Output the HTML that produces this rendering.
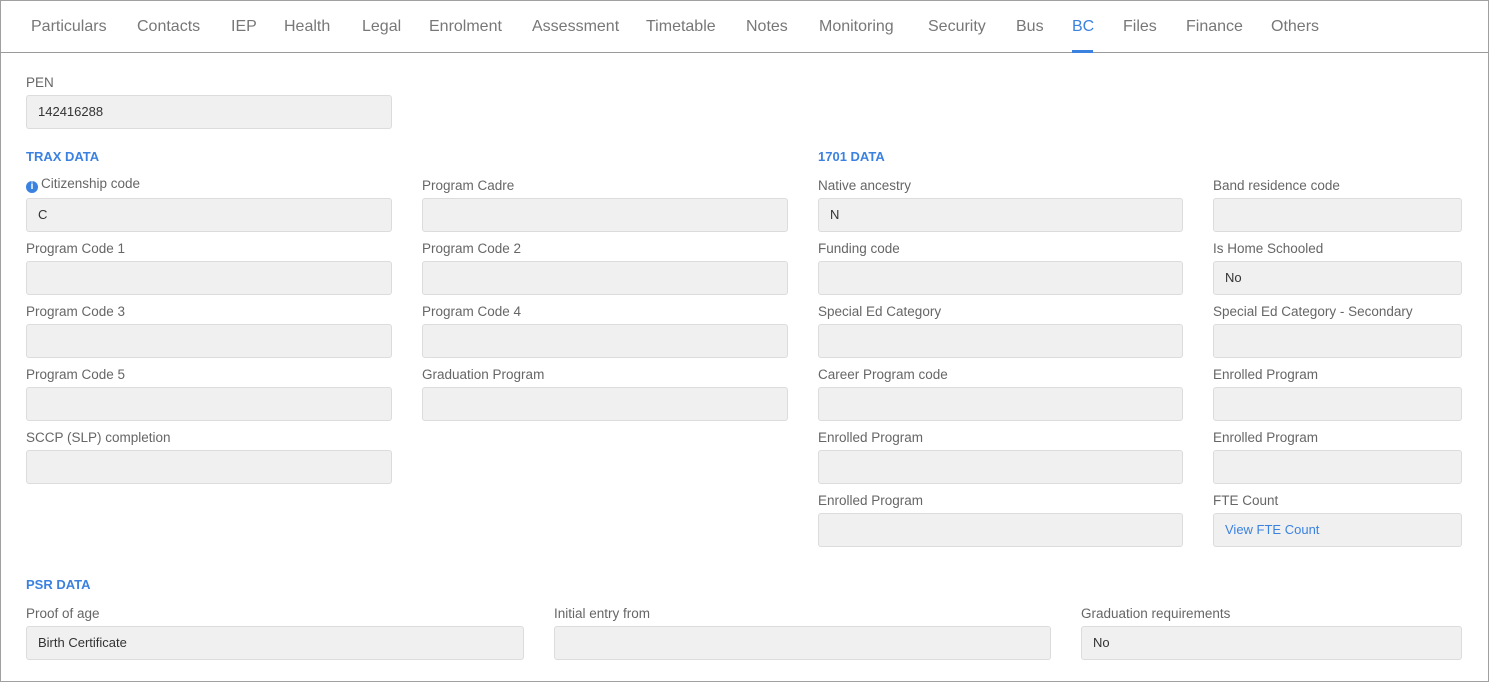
<!DOCTYPE html>
<html><head><meta charset="utf-8"><style>
*{box-sizing:border-box;margin:0;padding:0}
body{width:1489px;height:682px;background:#fff;font-family:"Liberation Sans",sans-serif;position:relative;overflow:hidden}
.frame{position:absolute;left:0;top:0;width:1489px;height:682px;border:1px solid #a0a0a0}
.tabline{position:absolute;left:0;top:52px;width:1489px;height:1px;background:#9a9a9a}
.tab{position:absolute;top:17px;font-size:16px;color:#777;line-height:20px;white-space:nowrap}
.tab.act{color:#3b82e0}
.ul{position:absolute;left:1072px;top:50px;width:21px;height:3px;background:#3b82e0}
.l{position:absolute;font-size:13.5px;color:#666;line-height:16px;white-space:nowrap}
.f{position:absolute;height:34px;background:#f0f0f0;border:1px solid #dcdcdc;border-radius:3px;font-size:13px;color:#333;line-height:32px;padding-left:11px;white-space:nowrap}
.h{position:absolute;font-size:13px;font-weight:bold;color:#3b82e0;line-height:16px}
.lk{color:#3b82e0}
.i{display:inline-block;width:12px;height:12px;border-radius:50%;background:#3b82e0;color:#fff;font-size:10px;font-weight:bold;text-align:center;line-height:12px;margin-right:3px;vertical-align:-1px}
</style></head><body>
<div class="frame"></div>
<div class="tab" style="left:31px">Particulars</div>
<div class="tab" style="left:137px">Contacts</div>
<div class="tab" style="left:231px">IEP</div>
<div class="tab" style="left:284px">Health</div>
<div class="tab" style="left:362px">Legal</div>
<div class="tab" style="left:429px">Enrolment</div>
<div class="tab" style="left:532px">Assessment</div>
<div class="tab" style="left:646px">Timetable</div>
<div class="tab" style="left:746px">Notes</div>
<div class="tab" style="left:819px">Monitoring</div>
<div class="tab" style="left:928px">Security</div>
<div class="tab" style="left:1016px">Bus</div>
<div class="tab act" style="left:1072px">BC</div>
<div class="tab" style="left:1123px">Files</div>
<div class="tab" style="left:1186px">Finance</div>
<div class="tab" style="left:1271px">Others</div>
<div class="tabline"></div><div class="ul"></div>

<div class="l" style="left:26px;top:75px">PEN</div>
<div class="f" style="left:26px;top:95px;width:366px">142416288</div>

<div class="h" style="left:26px;top:149px">TRAX DATA</div>
<div class="h" style="left:818px;top:149px">1701 DATA</div>

<div class="l" style="left:26px;top:176px"><span class="i">i</span>Citizenship code</div>
<div class="f" style="left:26px;top:198px;width:366px">C</div>
<div class="l" style="left:422px;top:178px">Program Cadre</div>
<div class="f" style="left:422px;top:198px;width:366px"></div>
<div class="l" style="left:818px;top:178px">Native ancestry</div>
<div class="f" style="left:818px;top:198px;width:365px">N</div>
<div class="l" style="left:1213px;top:178px">Band residence code</div>
<div class="f" style="left:1213px;top:198px;width:249px"></div>

<div class="l" style="left:26px;top:241px">Program Code 1</div>
<div class="f" style="left:26px;top:261px;width:366px"></div>
<div class="l" style="left:422px;top:241px">Program Code 2</div>
<div class="f" style="left:422px;top:261px;width:366px"></div>
<div class="l" style="left:818px;top:241px">Funding code</div>
<div class="f" style="left:818px;top:261px;width:365px"></div>
<div class="l" style="left:1213px;top:241px">Is Home Schooled</div>
<div class="f" style="left:1213px;top:261px;width:249px">No</div>

<div class="l" style="left:26px;top:304px">Program Code 3</div>
<div class="f" style="left:26px;top:324px;width:366px"></div>
<div class="l" style="left:422px;top:304px">Program Code 4</div>
<div class="f" style="left:422px;top:324px;width:366px"></div>
<div class="l" style="left:818px;top:304px">Special Ed Category</div>
<div class="f" style="left:818px;top:324px;width:365px"></div>
<div class="l" style="left:1213px;top:304px">Special Ed Category - Secondary</div>
<div class="f" style="left:1213px;top:324px;width:249px"></div>

<div class="l" style="left:26px;top:367px">Program Code 5</div>
<div class="f" style="left:26px;top:387px;width:366px"></div>
<div class="l" style="left:422px;top:367px">Graduation Program</div>
<div class="f" style="left:422px;top:387px;width:366px"></div>
<div class="l" style="left:818px;top:367px">Career Program code</div>
<div class="f" style="left:818px;top:387px;width:365px"></div>
<div class="l" style="left:1213px;top:367px">Enrolled Program</div>
<div class="f" style="left:1213px;top:387px;width:249px"></div>

<div class="l" style="left:26px;top:430px">SCCP (SLP) completion</div>
<div class="f" style="left:26px;top:450px;width:366px"></div>
<div class="l" style="left:818px;top:430px">Enrolled Program</div>
<div class="f" style="left:818px;top:450px;width:365px"></div>
<div class="l" style="left:1213px;top:430px">Enrolled Program</div>
<div class="f" style="left:1213px;top:450px;width:249px"></div>

<div class="l" style="left:818px;top:493px">Enrolled Program</div>
<div class="f" style="left:818px;top:513px;width:365px"></div>
<div class="l" style="left:1213px;top:493px">FTE Count</div>
<div class="f lk" style="left:1213px;top:513px;width:249px">View FTE Count</div>

<div class="h" style="left:26px;top:577px">PSR DATA</div>
<div class="l" style="left:26px;top:606px">Proof of age</div>
<div class="f" style="left:26px;top:626px;width:498px">Birth Certificate</div>
<div class="l" style="left:554px;top:606px">Initial entry from</div>
<div class="f" style="left:554px;top:626px;width:497px"></div>
<div class="l" style="left:1081px;top:606px">Graduation requirements</div>
<div class="f" style="left:1081px;top:626px;width:381px">No</div>
</body></html>
